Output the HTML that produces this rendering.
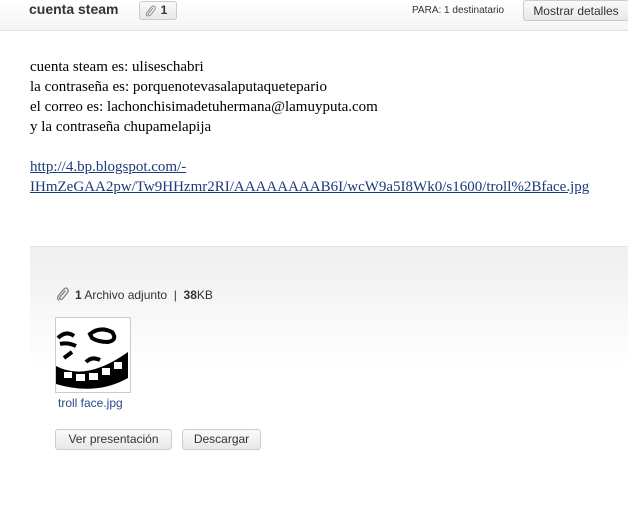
<!DOCTYPE html>
<html><head><meta charset="utf-8"><style>
body{margin:0;width:628px;height:515px;background:#fff;font-family:"Liberation Sans",sans-serif;position:relative;overflow:hidden}
.hdr{position:absolute;left:0;top:0;width:628px;height:30px;background:linear-gradient(#fff,#f4f4f4);border-bottom:1px solid #e2e2e2}
.abs{position:absolute}
.btn{position:absolute;border:1px solid #ccc;border-radius:3px;background:linear-gradient(#fafafa,#e8e8e8);color:#333;font-size:12px;text-align:center;box-sizing:border-box}
.body{position:absolute;left:30px;top:57px;font-family:"Liberation Serif",serif;font-size:15px;line-height:20px;color:#000;white-space:nowrap}
.body a{color:#1a3a7a}
.att{position:absolute;left:30px;top:246px;width:598px;height:120px;background:linear-gradient(#efefef,#fff);border-top:1px solid #e4e4e4}
</style></head><body>
<div class="hdr"></div>
<div class="abs" style="left:29px;top:1px;font-weight:bold;font-size:14px;color:#333">cuenta steam</div>
<div class="btn" style="left:139px;top:1px;width:38px;height:19px;font-weight:bold;line-height:17px;padding-left:12px">1<svg style="position:absolute;left:5px;top:3px" width="11" height="12" viewBox="0 0 11 12"><path d="M8 3 L3.5 8.5 Q2.5 10 3.8 10.5 Q4.8 11 5.8 9.8 L10 4.5 Q11 2.5 9.5 1.3 Q8 0.3 6.5 2 L2 7.5 Q0.5 10 2.5 11.5" stroke="#999" stroke-width="1.1" fill="none"/></svg></div>
<div class="abs" style="left:412px;top:5px;font-size:10px;color:#333">PARA: 1 destinatario</div>
<div class="btn" style="left:523px;top:0px;width:106px;height:21px;line-height:20px">Mostrar detalles</div>
<div class="body">cuenta steam es: uliseschabri<br>la contraseña es: porquenotevasalaputaquetepario<br>el correo es: lachonchisimadetuhermana@lamuyputa.com<br>y la contraseña chupamelapija<br><br><a href="#">http://4.bp.blogspot.com/-<br>IHmZeGAA2pw/Tw9HHzmr2RI/AAAAAAAAB6I/wcW9a5I8Wk0/s1600/troll%2Bface.jpg</a></div>
<div class="att"></div>
<svg class="abs" style="left:56px;top:287px" width="13" height="14" viewBox="0 0 11 12"><path d="M8 3 L3.5 8.5 Q2.5 10 3.8 10.5 Q4.8 11 5.8 9.8 L10 4.5 Q11 2.5 9.5 1.3 Q8 0.3 6.5 2 L2 7.5 Q0.5 10 2.5 11.5" stroke="#888" stroke-width="1.2" fill="none"/></svg>
<div class="abs" style="left:75px;top:288px;font-size:12px;color:#333"><b>1</b> Archivo adjunto &nbsp;|&nbsp; <b>38</b>KB</div>
<div class="abs" style="left:55px;top:317px;width:74px;height:74px;border:1px solid #ccc;background:#fff;overflow:hidden">
<svg width="74" height="74" viewBox="0 0 74 74"><path d="M2 20 Q10 12 18 18 M4 26 Q12 24 20 28 M34 16 Q44 8 56 14 Q62 22 52 24 Q42 24 36 20Z M8 40 L16 34 M30 44 Q36 38 44 42" stroke="#000" stroke-width="4" fill="none"/><path d="M0 48 Q30 64 72 34 L72 60 Q40 78 0 66Z" fill="#000"/><path d="M8 54 h8 v6 h-8z M20 56 h9 v7 h-9z M33 55 h9 v7 h-9z M46 50 h8 v7 h-8z M58 44 h8 v7 h-8z" fill="#fff"/></svg></div>
<div class="abs" style="left:58px;top:396px;font-size:12px;color:#2a4a8a">troll face.jpg</div>
<div class="btn" style="left:55px;top:429px;width:117px;height:21px;line-height:19px">Ver presentación</div>
<div class="btn" style="left:182px;top:429px;width:79px;height:21px;line-height:19px">Descargar</div>
</body></html>
